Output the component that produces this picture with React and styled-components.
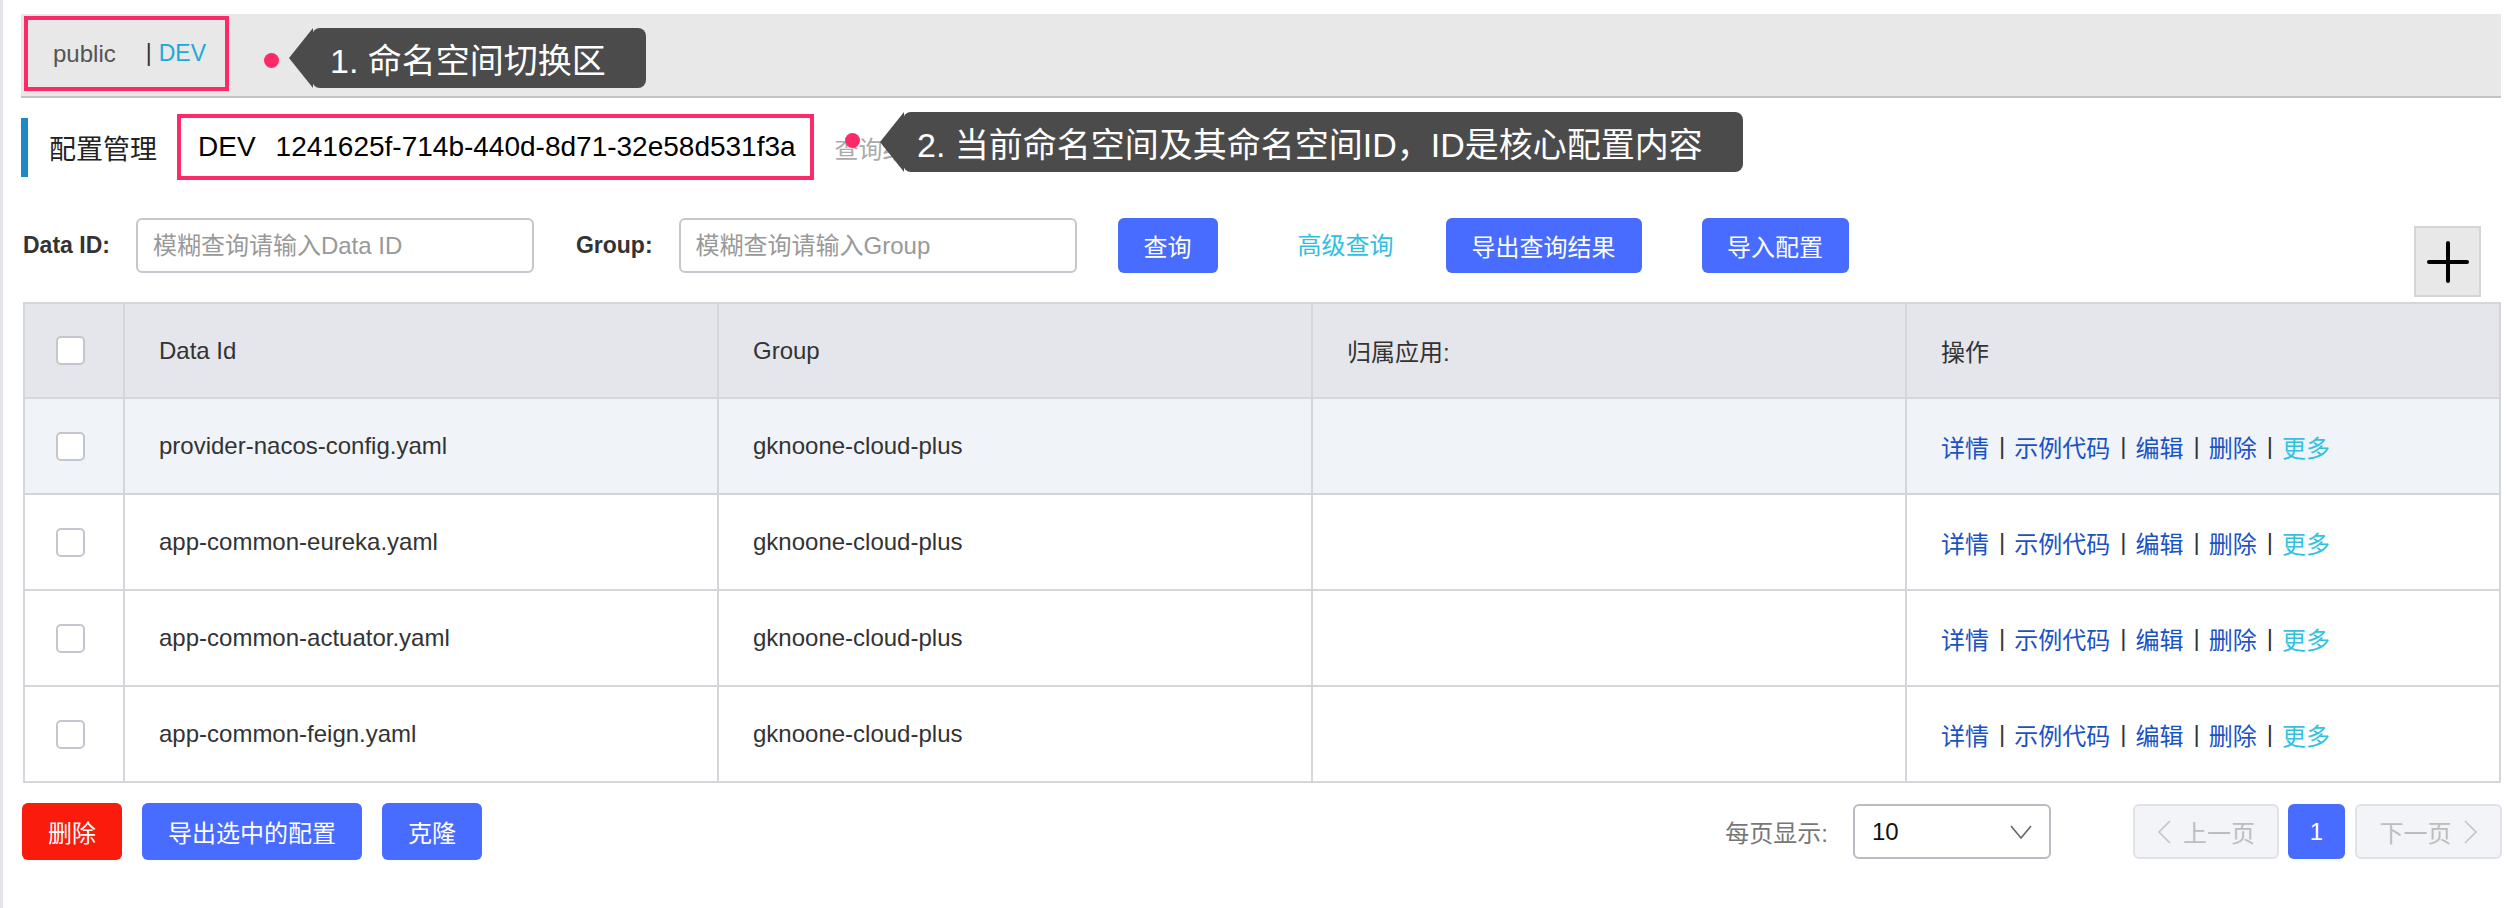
import React from 'react';
import styled, { createGlobalStyle } from 'styled-components';

const GlobalStyle = createGlobalStyle`
  html, body { margin: 0; padding: 0; background: #fff; }
  body {
    font-family: 'Liberation Sans', 'Noto Sans CJK SC', sans-serif;
    color: #333;
  }
  *, *::before, *::after { box-sizing: border-box; }
`;

const PINK = '#fd2a68';
const PRIMARY = '#486cff';
const LINE = '#d4d6dc';

const Page = styled.div`
  position: relative;
  width: 2518px;
  min-height: 908px;
  border-left: 3px solid #e3e5eb;
  padding: 14px 17px 0 18px;
`;

/* ---------- namespace bar ---------- */
const NamespaceBar = styled.div`
  display: flex;
  align-items: flex-start;
  height: 84px;
  padding-left: 3px;
  background: #e8e8e8;
  border-bottom: 2px solid #c4c4c4;
`;

const HighlightBox = styled.div`
  display: flex;
  align-items: center;
  border: 4px solid ${PINK};
  background: ${p => (p.$white ? '#fff' : 'transparent')};
`;

const NamespaceBox = styled(HighlightBox)`
  margin-top: 2px;
  width: 205px;
  height: 75px;
  padding-left: 25px;
`;

const NsLink = styled.span`
  font-size: ${p => (p.$active ? 23 : 24)}px;
  color: ${p => (p.$active ? '#1fa7d8' : '#555')};
`;

const NsSep = styled.span`
  font-size: 23px;
  color: #333;
  margin: 0 7px 0 30px;
`;

/* ---------- annotations ---------- */
const Dot = styled.span`
  position: absolute;
  left: ${p => p.$x}px;
  top: ${p => p.$y}px;
  width: 15px;
  height: 15px;
  border-radius: 50%;
  background: ${PINK};
  z-index: 3;
`;

const Callout = styled.div`
  position: absolute;
  left: ${p => p.$x}px;
  top: ${p => p.$y}px;
  height: 60px;
  display: flex;
  align-items: center;
  padding: 0 40px 0 ${p => p.$pl}px;
  background: #4b4b4b;
  border-radius: 8px;
  color: #fff;
  font-size: 34px;
  white-space: nowrap;
  z-index: 2;
  &::before {
    content: '';
    position: absolute;
    left: -23px;
    top: 0;
    border-top: 30px solid transparent;
    border-bottom: 30px solid transparent;
    border-right: 24px solid #4b4b4b;
  }
`;

/* ---------- title row ---------- */
const TitleRow = styled.div`
  display: flex;
  align-items: center;
  height: 66px;
  margin-top: 16px;
`;

const TitleBar = styled.span`
  width: 7px;
  height: 59px;
  background: #1d88c9;
`;

const Title = styled.span`
  margin-left: 21px;
  font-size: 27px;
  color: #222;
`;

const NsIdBox = styled(HighlightBox)`
  margin-left: 20px;
  height: 66px;
  padding: 0 14px 0 17px;
  font-size: 28px;
  color: #000;
`;

const NsIdName = styled.span`
  margin-right: 20px;
`;

const ResultText = styled.span`
  margin-left: 21px;
  font-size: 24px;
  color: #aaa;
  white-space: nowrap;
`;

/* ---------- search row ---------- */
const SearchRow = styled.div`
  display: flex;
  align-items: flex-start;
  margin-top: 38px;
  padding-left: 2px;
`;

const FieldLabel = styled.label`
  margin-left: ${p => p.$ml || 0}px;
  height: 55px;
  line-height: 55px;
  font-size: 23px;
  font-weight: bold;
  color: #333;
  white-space: nowrap;
`;

const TextInput = styled.input`
  margin-left: 26px;
  width: 398px;
  height: 55px;
  padding: 0 15px;
  border: 2px solid #c5c7cf;
  border-radius: 6px;
  font-family: inherit;
  font-size: 24px;
  color: #333;
  background: #fff;
  outline: none;
  &::placeholder { color: #999; }
`;

const Button = styled.button`
  flex: none;
  display: inline-flex;
  align-items: center;
  justify-content: center;
  margin-left: ${p => p.$ml || 0}px;
  width: ${p => p.$w}px;
  height: ${p => p.$h || 55}px;
  padding: 0;
  border: none;
  border-radius: 6px;
  background: ${p => (p.$danger ? '#fb1b0d' : PRIMARY)};
  color: #fff;
  font-family: inherit;
  font-size: 24px;
`;

const TextLink = styled.span`
  margin-left: ${p => p.$ml || 0}px;
  height: 55px;
  line-height: 55px;
  font-size: 24px;
  color: #30bfe0;
  white-space: nowrap;
`;

const PlusButton = styled.button`
  flex: none;
  display: flex;
  align-items: center;
  justify-content: center;
  margin: 8px 20px 0 auto;
  width: 67px;
  height: 71px;
  padding: 0;
  background: #e8e8e8;
  border: 2px solid #d5d5d5;
`;

/* ---------- table ---------- */
const TableBox = styled.div`
  margin: 5px 0 0 2px;
  width: 2478px;
  border-top: 2px solid ${LINE};
  border-left: 2px solid ${LINE};
`;

const Row = styled.div`
  display: grid;
  grid-template-columns: 100px repeat(4, 594px);
  height: ${p => (p.$head ? 95 : 96)}px;
  background: ${p => (p.$head ? '#e4e6eb' : p.$hover ? '#f0f3f7' : '#fff')};
`;

const Cell = styled.div`
  display: flex;
  align-items: center;
  padding-left: 34px;
  border-right: 2px solid ${LINE};
  border-bottom: 2px solid ${LINE};
  font-size: 24px;
  color: #333;
  white-space: nowrap;
`;

const CheckCell = styled(Cell)`
  padding-left: 31px;
`;

const CheckBox = styled.span`
  width: 29px;
  height: 29px;
  border: 2px solid #c3c6cf;
  border-radius: 5px;
  background: #fff;
`;

const ActionLink = styled.span`
  color: ${p => (p.$more ? '#33c1e0' : '#1b52c4')};
`;

const ActionSep = styled.span`
  margin: 0 9px 0 10px;
  color: #333;
`;

/* ---------- footer ---------- */
const Footer = styled.div`
  display: flex;
  align-items: center;
  margin-top: 20px;
  padding-left: 1px;
`;

const ButtonGroup = styled.div`
  display: flex;
  gap: 20px;
`;

const Pager = styled.div`
  display: flex;
  align-items: center;
  margin-left: auto;
  margin-right: -1px;
`;

const PageSizeLabel = styled.span`
  font-size: 24px;
  color: #777;
  white-space: nowrap;
`;

const Select = styled.div`
  display: flex;
  align-items: center;
  justify-content: space-between;
  margin-left: 25px;
  width: 198px;
  height: 55px;
  padding: 0 17px;
  border: 2px solid #b9bcc6;
  border-radius: 6px;
  font-size: 24px;
  color: #111;
`;

const PageButton = styled.button`
  flex: none;
  display: inline-flex;
  align-items: center;
  justify-content: center;
  gap: 11px;
  margin-left: ${p => p.$ml}px;
  width: ${p => p.$w}px;
  height: 55px;
  padding: 0;
  border: ${p => (p.$active ? 'none' : '2px solid #e0e2e7')};
  border-radius: 6px;
  background: ${p => (p.$active ? PRIMARY : '#f3f4f7')};
  color: ${p => (p.$active ? '#fff' : '#bdbdbd')};
  font-family: inherit;
  font-size: 24px;
`;

const Chevron = ({ dir }) => (
  <svg width="15" height="24" viewBox="0 0 15 24" fill="none">
    <polyline
      points={dir === 'left' ? '13,1 2,12 13,23' : '2,1 13,12 2,23'}
      stroke="#c4c4c4"
      strokeWidth="1.6"
    />
  </svg>
);

const rows = [
  'provider-nacos-config.yaml',
  'app-common-eureka.yaml',
  'app-common-actuator.yaml',
  'app-common-feign.yaml',
];

const actions = ['详情', '示例代码', '编辑', '删除'];

export default function App() {
  return (
    <>
      <GlobalStyle />
      <Page>
        <NamespaceBar>
          <NamespaceBox>
            <NsLink>public</NsLink>
            <NsSep>|</NsSep>
            <NsLink $active>DEV</NsLink>
          </NamespaceBox>
        </NamespaceBar>

        <TitleRow>
          <TitleBar />
          <Title>配置管理</Title>
          <NsIdBox $white>
            <NsIdName>DEV</NsIdName>
            <span>1241625f-714b-440d-8d71-32e58d531f3a</span>
          </NsIdBox>
          <ResultText>查询结果：共查询到 4 条满足要求的配置。</ResultText>
        </TitleRow>

        <SearchRow>
          <FieldLabel>Data ID:</FieldLabel>
          <TextInput placeholder="模糊查询请输入Data ID" />
          <FieldLabel $ml={42}>Group:</FieldLabel>
          <TextInput placeholder="模糊查询请输入Group" />
          <Button $ml={41} $w={100}>查询</Button>
          <TextLink $ml={80}>高级查询</TextLink>
          <Button $ml={52} $w={196}>导出查询结果</Button>
          <Button $ml={60} $w={147}>导入配置</Button>
          <PlusButton aria-label="add">
            <svg width="42" height="42" viewBox="0 0 42 42">
              <line x1="21" y1="2" x2="21" y2="40" stroke="#000" strokeWidth="4" strokeLinecap="round" />
              <line x1="2" y1="21" x2="40" y2="21" stroke="#000" strokeWidth="4" strokeLinecap="round" />
            </svg>
          </PlusButton>
        </SearchRow>

        <TableBox>
          <Row $head>
            <CheckCell><CheckBox /></CheckCell>
            <Cell>Data Id</Cell>
            <Cell>Group</Cell>
            <Cell>归属应用:</Cell>
            <Cell>操作</Cell>
          </Row>
          {rows.map((name, i) => (
            <Row key={name} $hover={i === 0}>
              <CheckCell><CheckBox /></CheckCell>
              <Cell>{name}</Cell>
              <Cell>gknoone-cloud-plus</Cell>
              <Cell />
              <Cell>
                {actions.map(a => (
                  <React.Fragment key={a}>
                    <ActionLink>{a}</ActionLink>
                    <ActionSep>|</ActionSep>
                  </React.Fragment>
                ))}
                <ActionLink $more>更多</ActionLink>
              </Cell>
            </Row>
          ))}
        </TableBox>

        <Footer>
          <ButtonGroup>
            <Button $danger $w={100} $h={57}>删除</Button>
            <Button $w={220} $h={57}>导出选中的配置</Button>
            <Button $w={100} $h={57}>克隆</Button>
          </ButtonGroup>
          <Pager>
            <PageSizeLabel>每页显示:</PageSizeLabel>
            <Select>
              <span>10</span>
              <svg width="22" height="14" viewBox="0 0 22 14" fill="none">
                <polyline points="1,1 11,13 21,1" stroke="#666" strokeWidth="1.6" />
              </svg>
            </Select>
            <PageButton $ml={82} $w={146}>
              <Chevron dir="left" />
              <span>上一页</span>
            </PageButton>
            <PageButton $ml={9} $w={57} $active>1</PageButton>
            <PageButton $ml={10} $w={147}>
              <span>下一页</span>
              <Chevron dir="right" />
            </PageButton>
          </Pager>
        </Footer>

        <Dot $x={261} $y={53} />
        <Callout $x={309} $y={28} $pl={18}>1. 命名空间切换区</Callout>
        <Dot $x={842} $y={133} />
        <Callout $x={900} $y={112} $pl={14}>2. 当前命名空间及其命名空间ID，ID是核心配置内容</Callout>
      </Page>
    </>
  );
}
